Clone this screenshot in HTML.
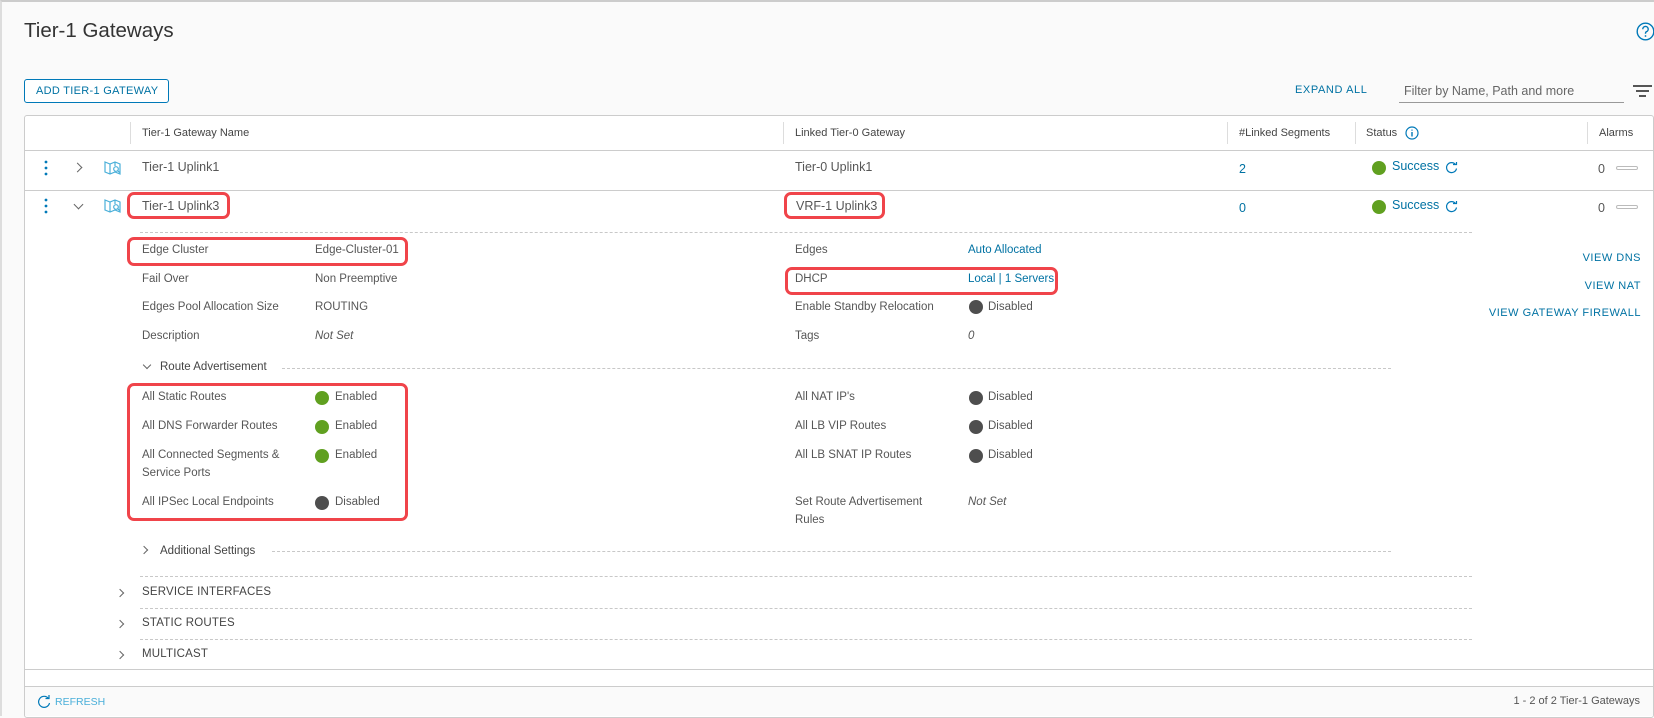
<!DOCTYPE html>
<html><head><meta charset="utf-8"><style>
*{margin:0;padding:0;box-sizing:border-box}
body{width:1654px;height:716px;background:#fafafa;font-family:"Liberation Sans",sans-serif;color:#565656;position:relative;overflow:hidden;border-top:2px solid #ccc;border-left:2px solid #ddd}
.a{position:absolute;line-height:16px;font-size:11.5px;white-space:nowrap}
.r{position:absolute;line-height:16px;font-size:11px;white-space:nowrap;right:13px;letter-spacing:.5px;color:#0072a3}
.b{color:#0072a3}
.box{position:absolute;border:3px solid #f0444a;border-radius:7px}
.dot{position:absolute;width:14px;height:14px;border-radius:50%}
.g{background:#60a020}.d{background:#4e4e4e}
.dash{position:absolute;border-top:1px dashed #c8c8c8;height:0}
.vs{position:absolute;width:1px;background:#ddd;top:120px;height:22px}
.chev{position:absolute;width:7px;height:7px;border-right:1.5px solid #666;border-bottom:1.5px solid #666}
</style></head><body>
<div class="a" style="left:22px;top:16px;font-size:20.5px;line-height:26px;color:#333">Tier-1 Gateways</div>
<svg style="position:absolute;left:1634px;top:20px" width="19" height="19" viewBox="0 0 19 19"><circle cx="9.5" cy="9.5" r="8.3" fill="none" stroke="#0079b8" stroke-width="1.4"/><path d="M6.8 7.2a2.7 2.7 0 1 1 3.6 2.5c-.7.3-.9.8-.9 1.5v.6" fill="none" stroke="#0079b8" stroke-width="1.4"/><circle cx="9.5" cy="14" r=".9" fill="#0079b8"/></svg>

<div style="position:absolute;left:22px;top:77px;width:145px;height:24px;border:1px solid #0079b8;border-radius:3px;background:#fff"></div>
<div class="a b" style="left:34px;top:81px;font-size:11px;letter-spacing:.3px;width:122px;text-align:center">ADD TIER-1 GATEWAY</div>
<div class="a b" style="left:1293px;top:80px;font-size:11px;letter-spacing:.6px">EXPAND ALL</div>
<div class="a" style="left:1402px;top:81px;font-size:12.5px;color:#666">Filter by Name, Path and more</div>
<div style="position:absolute;left:1397px;top:100px;width:225px;border-top:1px solid #999"></div>
<div style="position:absolute;left:1631px;top:83px;width:19px;border-top:2px solid #555"></div>
<div style="position:absolute;left:1634px;top:88px;width:13px;border-top:2px solid #555"></div>
<div style="position:absolute;left:1637px;top:93px;width:7px;border-top:2px solid #555"></div>

<div style="position:absolute;left:22px;top:113px;width:1630px;height:603px;border:1px solid #ccc;border-radius:3px;background:#fff"></div>
<div style="position:absolute;left:23px;top:148px;width:1628px;border-top:1px solid #ccc"></div>
<div style="position:absolute;left:23px;top:188px;width:1628px;border-top:1px solid #ccc"></div>
<div style="position:absolute;left:23px;top:667px;width:1628px;border-top:1px solid #ccc"></div>
<div style="position:absolute;left:23px;top:684px;width:1628px;height:30px;border-top:1px solid #ccc;background:#fafafa"></div>

<div class="vs" style="left:128px"></div><div class="vs" style="left:781px"></div><div class="vs" style="left:1225px"></div><div class="vs" style="left:1353px"></div><div class="vs" style="left:1585px"></div>
<div class="a" style="left:140px;top:123px;font-size:11px;color:#444">Tier-1 Gateway Name</div>
<div class="a" style="left:793px;top:123px;font-size:11px;color:#444">Linked Tier-0 Gateway</div>
<div class="a" style="left:1237px;top:123px;font-size:11px;color:#444">#Linked Segments</div>
<div class="a" style="left:1364px;top:123px;font-size:11px;color:#444">Status</div>
<svg style="position:absolute;left:1403px;top:124px" width="14" height="14"><circle cx="7" cy="7" r="6" fill="none" stroke="#0079b8" stroke-width="1.2"/><path d="M7 6v4.5M7 3.6v1" stroke="#0079b8" stroke-width="1.4"/></svg>
<div class="a" style="left:1597px;top:123px;font-size:11px;color:#444">Alarms</div>

<svg style="position:absolute;left:42px;top:158px" width="4" height="16"><circle cx="2" cy="2" r="1.4" fill="#0079b8"/><circle cx="2" cy="8" r="1.4" fill="#0079b8"/><circle cx="2" cy="14" r="1.4" fill="#0079b8"/></svg>
<svg style="position:absolute;left:42px;top:196px" width="4" height="16"><circle cx="2" cy="2" r="1.4" fill="#0079b8"/><circle cx="2" cy="8" r="1.4" fill="#0079b8"/><circle cx="2" cy="14" r="1.4" fill="#0079b8"/></svg>
<div class="chev" style="left:72px;top:162px;transform:rotate(-45deg)"></div>
<div class="chev" style="left:73px;top:199px;transform:rotate(45deg)"></div>
<svg style="position:absolute;left:102px;top:158px" width="18" height="16" viewBox="0 0 18 16"><path d="M1 2l5 2 5-2 5 2v10l-5-2-5 2-5-2z M6 4v10 M11 2v4" fill="none" stroke="#49afd9" stroke-width="1.2"/><circle cx="12" cy="9" r="2.3" fill="none" stroke="#49afd9" stroke-width="1.2"/><path d="M13.6 10.6l2 2" stroke="#49afd9" stroke-width="1.2"/></svg>
<svg style="position:absolute;left:102px;top:196px" width="18" height="16" viewBox="0 0 18 16"><path d="M1 2l5 2 5-2 5 2v10l-5-2-5 2-5-2z M6 4v10 M11 2v4" fill="none" stroke="#49afd9" stroke-width="1.2"/><circle cx="12" cy="9" r="2.3" fill="none" stroke="#49afd9" stroke-width="1.2"/><path d="M13.6 10.6l2 2" stroke="#49afd9" stroke-width="1.2"/></svg>

<div class="a" style="left:140px;top:157px;font-size:12.5px">Tier-1 Uplink1</div>
<div class="a" style="left:793px;top:157px;font-size:12.5px">Tier-0 Uplink1</div>
<div class="a b" style="left:1237px;top:159px;font-size:12.5px">2</div>
<div class="dot g" style="left:1370px;top:159px"></div>
<div class="a b" style="left:1390px;top:156px;font-size:12.5px">Success</div>
<svg style="position:absolute;left:1443px;top:159px" width="13" height="13"><path d="M10.5 3.5A5 5 0 1 0 11.5 7.5" fill="none" stroke="#0079b8" stroke-width="1.2"/><path d="M8 2.5h3.5V0" fill="none" stroke="#0079b8" stroke-width="1.2" transform="translate(0,1)"/></svg>
<div class="a" style="left:1596px;top:159px;font-size:12.5px">0</div>
<div style="position:absolute;left:1614px;top:164px;width:22px;height:4px;border:1px solid #bbb;border-radius:2px"></div>

<div class="box" style="left:125px;top:190px;width:103px;height:27px"></div>
<div class="a" style="left:140px;top:196px;font-size:12.5px">Tier-1 Uplink3</div>
<div class="box" style="left:782px;top:190px;width:101px;height:27px"></div>
<div class="a" style="left:794px;top:196px;font-size:12.5px">VRF-1 Uplink3</div>
<div class="a b" style="left:1237px;top:198px;font-size:12.5px">0</div>
<div class="dot g" style="left:1370px;top:198px"></div>
<div class="a b" style="left:1390px;top:195px;font-size:12.5px">Success</div>
<svg style="position:absolute;left:1443px;top:198px" width="13" height="13"><path d="M10.5 3.5A5 5 0 1 0 11.5 7.5" fill="none" stroke="#0079b8" stroke-width="1.2"/><path d="M8 2.5h3.5V0" fill="none" stroke="#0079b8" stroke-width="1.2" transform="translate(0,1)"/></svg>
<div class="a" style="left:1596px;top:198px;font-size:12.5px">0</div>
<div style="position:absolute;left:1614px;top:203px;width:22px;height:4px;border:1px solid #bbb;border-radius:2px"></div>

<div class="dash" style="left:138px;top:230px;width:1332px"></div>

<div class="box" style="left:125px;top:235px;width:281px;height:29px"></div>
<div class="a" style="left:140px;top:240px">Edge Cluster</div><div class="a" style="left:313px;top:240px">Edge-Cluster-01</div>
<div class="a" style="left:140px;top:269px">Fail Over</div><div class="a" style="left:313px;top:269px">Non Preemptive</div>
<div class="a" style="left:140px;top:297px">Edges Pool Allocation Size</div><div class="a" style="left:313px;top:297px">ROUTING</div>
<div class="a" style="left:140px;top:326px">Description</div><div class="a" style="left:313px;top:326px;font-style:italic">Not Set</div>

<div class="a" style="left:793px;top:240px">Edges</div><div class="a b" style="left:966px;top:240px">Auto Allocated</div>
<div class="box" style="left:783px;top:265px;width:273px;height:28px"></div>
<div class="a" style="left:793px;top:269px">DHCP</div><div class="a b" style="left:966px;top:269px">Local | 1 Servers</div>
<div class="a" style="left:793px;top:297px">Enable Standby Relocation</div><div class="dot d" style="left:967px;top:298px"></div><div class="a" style="left:986px;top:297px">Disabled</div>
<div class="a" style="left:793px;top:326px">Tags</div><div class="a" style="left:966px;top:326px;font-style:italic">0</div>

<div class="r" style="top:248px">VIEW DNS</div>
<div class="r" style="top:276px">VIEW NAT</div>
<div class="r" style="top:303px">VIEW GATEWAY FIREWALL</div>

<div class="chev" style="left:142px;top:360px;transform:rotate(45deg);width:6px;height:6px"></div>
<div class="a" style="left:158px;top:357px;color:#444">Route Advertisement</div>
<div class="dash" style="left:280px;top:366px;width:1109px"></div>

<div class="box" style="left:125px;top:381px;width:281px;height:138px"></div>
<div class="a" style="left:140px;top:387px">All Static Routes</div><div class="dot g" style="left:313px;top:389px"></div><div class="a" style="left:333px;top:387px">Enabled</div>
<div class="a" style="left:140px;top:416px">All DNS Forwarder Routes</div><div class="dot g" style="left:313px;top:418px"></div><div class="a" style="left:333px;top:416px">Enabled</div>
<div class="a" style="left:140px;top:445px">All Connected Segments &amp;</div><div class="a" style="left:140px;top:463px">Service Ports</div><div class="dot g" style="left:313px;top:447px"></div><div class="a" style="left:333px;top:445px">Enabled</div>
<div class="a" style="left:140px;top:492px">All IPSec Local Endpoints</div><div class="dot d" style="left:313px;top:494px"></div><div class="a" style="left:333px;top:492px">Disabled</div>

<div class="a" style="left:793px;top:387px">All NAT IP's</div><div class="dot d" style="left:967px;top:389px"></div><div class="a" style="left:986px;top:387px">Disabled</div>
<div class="a" style="left:793px;top:416px">All LB VIP Routes</div><div class="dot d" style="left:967px;top:418px"></div><div class="a" style="left:986px;top:416px">Disabled</div>
<div class="a" style="left:793px;top:445px">All LB SNAT IP Routes</div><div class="dot d" style="left:967px;top:447px"></div><div class="a" style="left:986px;top:445px">Disabled</div>
<div class="a" style="left:793px;top:492px">Set Route Advertisement</div><div class="a" style="left:793px;top:510px">Rules</div><div class="a" style="left:966px;top:492px;font-style:italic">Not Set</div>

<div class="chev" style="left:139px;top:545px;transform:rotate(-45deg);width:6px;height:6px"></div>
<div class="a" style="left:158px;top:541px;color:#444">Additional Settings</div>
<div class="dash" style="left:270px;top:549px;width:1119px"></div>

<div class="dash" style="left:138px;top:574px;width:1332px"></div>
<div class="chev" style="left:115px;top:588px;transform:rotate(-45deg);width:6px;height:6px"></div>
<div class="a" style="left:140px;top:582px;color:#444;letter-spacing:.2px">SERVICE INTERFACES</div>
<div class="dash" style="left:138px;top:606px;width:1332px"></div>
<div class="chev" style="left:115px;top:619px;transform:rotate(-45deg);width:6px;height:6px"></div>
<div class="a" style="left:140px;top:613px;color:#444;letter-spacing:.2px">STATIC ROUTES</div>
<div class="dash" style="left:138px;top:637px;width:1332px"></div>
<div class="chev" style="left:115px;top:650px;transform:rotate(-45deg);width:6px;height:6px"></div>
<div class="a" style="left:140px;top:644px;color:#444;letter-spacing:.2px">MULTICAST</div>

<svg style="position:absolute;left:35px;top:693px" width="14" height="14"><path d="M11.5 3.5A5.5 5.5 0 1 0 12.5 8" fill="none" stroke="#0079b8" stroke-width="1.2"/><path d="M8.5 3.5h3.5V0" fill="none" stroke="#0079b8" stroke-width="1.2"/></svg>
<div class="a b" style="left:53px;top:692px;font-size:10.5px;color:#49afd9">REFRESH</div>
<div class="a" style="right:14px;top:691px;font-size:11px">1 - 2 of 2 Tier-1 Gateways</div>
</body></html>
